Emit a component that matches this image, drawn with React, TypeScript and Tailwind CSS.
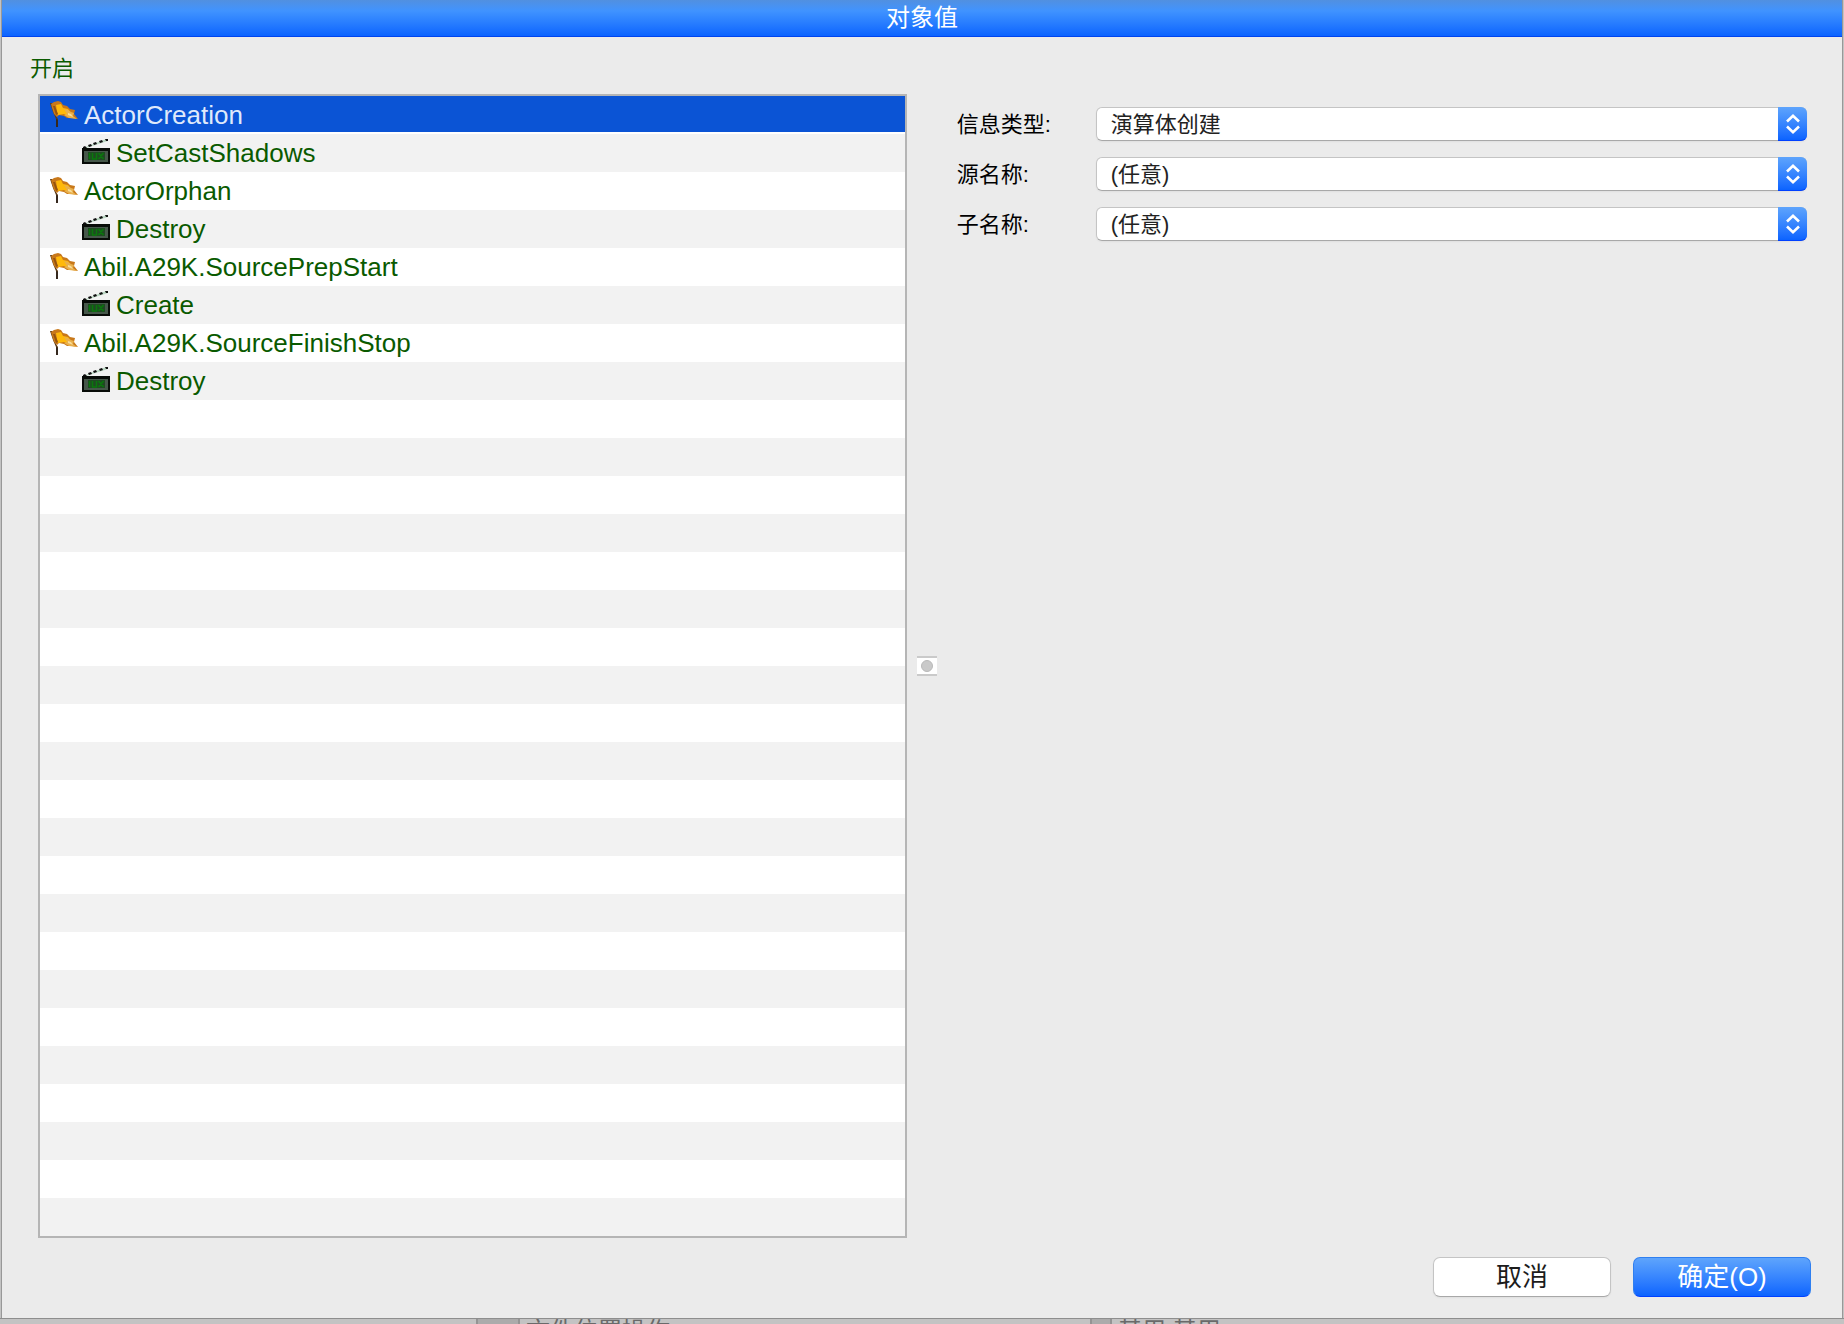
import React, { useState } from 'react';

interface TreeItem {
  label: string;
  kind: 'event' | 'action';
}

const ITEMS: TreeItem[] = [
  { label: 'ActorCreation', kind: 'event' },
  { label: 'SetCastShadows', kind: 'action' },
  { label: 'ActorOrphan', kind: 'event' },
  { label: 'Destroy', kind: 'action' },
  { label: 'Abil.A29K.SourcePrepStart', kind: 'event' },
  { label: 'Create', kind: 'action' },
  { label: 'Abil.A29K.SourceFinishStop', kind: 'event' },
  { label: 'Destroy', kind: 'action' },
];

const FIELDS = [
  { id: 'msg-type', label: '信息类型:', value: '演算体创建' },
  { id: 'source-name', label: '源名称:', value: '(任意)' },
  { id: 'sub-name', label: '子名称:', value: '(任意)' },
];

const FlagIcon: React.FC = () => (
  <svg viewBox="0 0 28 26" className="w-7 h-[26px] shrink-0">
    <path d="M0 2h2l2 5 2 8 2 3v8H6v-8L3 11z" fill="#5a3a18" />
    <path d="M1 3l3-2 4-1 3 1 2 3 4 1 3 3 5 1-1 4 4 5-6-1-5 0-3-2-5-1-2 2-3-3-2-6z" fill="#c8781a" />
    <path d="M6 4l5-1 2 4 5 1 3 4-3 3-4-2-6 1-1-3z" fill="#ffb90a" />
    <path d="M14 8l4 1 3 2 3 1-1 3 4 3-8-1-5-3 3-1z" fill="#e9b04c" />
    <path d="M18 12l3 1 2 3-5-2z" fill="#f8dc98" />
    <path d="M3 5l2 0 3 8-2 1z" fill="#95540f" />
    <path d="M6 18v8h2v-7z" fill="#35281e" />
  </svg>
);

const ClapperIcon: React.FC = () => (
  <svg viewBox="0 0 28 26" className="w-7 h-[26px] shrink-0">
    <path d="M1 9L24 0l2 0v2L4 9z" fill="#bcd8c4" />
    <path d="M1 8l2-1 2 2H1zM6 6l3-1 1 2-3 1zM11 4l3-1 1 2-3 1zM17 2l3-1 1 2-3 1zM23 0h3v2l-2 0z" fill="#111" />
    <path d="M0 9h28v16H0z" fill="#080c08" />
    <path d="M2 12h24v11H2z" fill="#46584a" />
    <path d="M6 13h17v8H6z" fill="#1f4a22" />
    <path d="M7.5 14v6M10.500 14v6h4v-6M16.500 14l5 6M21.500 14l-5 6" fill="none" stroke="#0a780c" strokeWidth="1.5" />
  </svg>
);

const SelectArrows: React.FC = () => (
  <span className="pointer-events-none col-start-1 row-start-1 justify-self-end w-[29px] h-[34px] rounded-r-[6px] border-b border-[#0040ff] bg-linear-to-b from-[#5ea4fc] to-[#0b63ff] flex items-center justify-center">
    <svg viewBox="0 0 14 20" className="w-[14px] h-5" fill="none" stroke="#fff" strokeWidth="2.6">
      <path d="M1 7.5L7 1.8l6 5.7M1 12.5l6 5.7 6-5.7" />
    </svg>
  </span>
);

const App: React.FC = () => {
  const [selected, setSelected] = useState(0);

  return (
    <div className="min-h-screen flex flex-col bg-[#c3c3c3] font-['Liberation_Sans','Noto_Sans_CJK_SC',sans-serif]">
      <main className="flex-1 flex flex-col mx-[2px] bg-[#ebebeb] outline outline-[#989898]">
        <header className="h-[37px] shrink-0 flex items-center justify-center border-b border-[#0044ee] bg-linear-to-b from-[#5190e0] via-[#4093ff] via-30% to-[#0b63ff]">
          <h1 className="text-2xl leading-9 text-white">对象值</h1>
        </header>

        <div className="flex-1 flex flex-col pl-9 pr-[31px] pb-[21px]">
          <h2 className="-ml-2 h-[57px] pt-4 text-[22px] leading-8 text-[#0a5a00]">开启</h2>

          <div className="flex items-center">
            <ul className="w-[49%] shrink-0 border-2 border-[#b5b5b5]">
              {Array.from({ length: 30 }, (_, i) => {
                const item = ITEMS[i];
                if (!item) {
                  return <li key={i} className="h-[38px] odd:bg-white even:bg-[#f2f2f2]" />;
                }
                return (
                  <li key={i} className="h-[38px] odd:bg-white even:bg-[#f2f2f2]">
                    <button
                      onClick={() => setSelected(i)}
                      className={`w-full h-9 flex items-center gap-[6px] text-[26px] leading-9 ${item.kind === 'action' ? 'pl-[42px]' : 'pl-[10px]'} ${selected === i ? 'bg-[#0b54d5] text-[#dfe9fb]' : 'text-[#0a5a00]'}`}
                    >
                      {item.kind === 'event' ? <FlagIcon /> : <ClapperIcon />}
                      <span className="pt-[2px]">{item.label}</span>
                    </button>
                  </li>
                );
              })}
            </ul>

            <div className="ml-[10px] w-5 h-5 shrink-0 flex items-center justify-center bg-white border-y-2 border-[#cacaca]">
              <span className="w-3 h-3 rounded-full bg-[#c9c9c9] border border-[#b9b9b9]" />
            </div>

            <form className="flex-1 self-start ml-5 mt-[13px] mr-1 flex flex-col gap-4">
              {FIELDS.map((field) => (
                <div key={field.id} className="flex items-center h-[34px] text-[22px]">
                  <label htmlFor={field.id} className="w-[139px] shrink-0 text-black">{field.label}</label>
                  <div className="flex-1 grid">
                    <select
                      id={field.id}
                      className="col-start-1 row-start-1 appearance-none w-full h-[34px] pl-[14px] rounded-[6px] border border-[#c4c4c4] border-b-[#a8a8a8] bg-white text-[#222] shadow-xs"
                    >
                      <option>{field.value}</option>
                    </select>
                    <SelectArrows />
                  </div>
                </div>
              ))}
            </form>
          </div>

          <footer className="mt-auto flex justify-end gap-[22px] text-[26px] leading-9">
            <button className="w-[178px] h-10 rounded-[7px] border border-[#c4c4c4] border-b-[#a8a8a8] bg-white text-[#1c1c1c] shadow-xs">取消</button>
            <button className="w-[178px] h-10 rounded-[7px] border border-[#2f7ff0] border-b-[#0040ff] bg-linear-to-b from-[#5ea4fc] to-[#0b63ff] text-white">确定(O)</button>
          </footer>
        </div>
      </main>

      {/* sliver of the window behind the dialog */}
      <div className="h-[6px] shrink-0 overflow-hidden flex pl-[476px] border-t border-[#8e8e8e] text-2xl leading-6 text-[#6a6a6a]">
        <span className="w-11 shrink-0 h-[6px] bg-[#ababab] border-x-2 border-[#949494]" />
        <span className="ml-[6px] w-[564px] shrink-0">文件位置操作</span>
        <span className="w-[22px] shrink-0 h-[6px] bg-[#ababab] border-x-2 border-[#949494]" />
        <span className="ml-[6px]">基用 基用</span>
      </div>
    </div>
  );
};

export default App;
